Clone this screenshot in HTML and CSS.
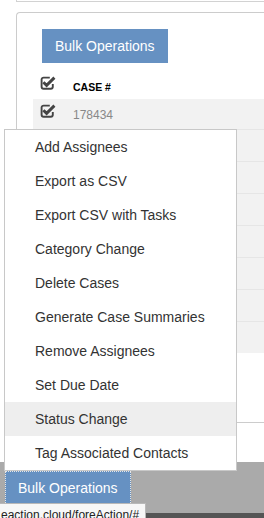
FILE: index.html
```html
<!DOCTYPE html>
<html lang="en">
<head>
    <meta charset="UTF-8">
    <meta name="viewport" content="width=device-width, initial-scale=1.0">
    <title>Cases</title>
    <link rel="stylesheet" href="styles.css">
</head>
<body>
    <div class="top-panel"></div>

    <div class="panel">
        <button class="btn">Bulk Operations</button>

        <div class="case-table">
            <div class="row head">
                <svg class="check" viewBox="0 0 16 14" width="16" height="14">
                    <path d="M9.8 1.6H3.6a2 2 0 0 0-2 2v7.2a2 2 0 0 0 2 2h7.2a2 2 0 0 0 2-2V8" fill="none" stroke="#444" stroke-width="1.9"/>
                    <path d="M3.4 6.2l3.2 3.2L14.4 1.6" fill="none" stroke="#444" stroke-width="2.9"/>
                </svg>
                <span class="label">CASE #</span>
            </div>
            <div class="row first">
                <svg class="check" viewBox="0 0 16 14" width="16" height="14">
                    <path d="M9.8 1.6H3.6a2 2 0 0 0-2 2v7.2a2 2 0 0 0 2 2h7.2a2 2 0 0 0 2-2V8" fill="none" stroke="#444" stroke-width="1.9"/>
                    <path d="M3.4 6.2l3.2 3.2L14.4 1.6" fill="none" stroke="#444" stroke-width="2.9"/>
                </svg>
                <span class="num">178434</span>
            </div>
            <div class="row"></div>
            <div class="row"></div>
            <div class="row"></div>
            <div class="row"></div>
            <div class="row"></div>
            <div class="row"></div>
            <div class="row"></div>
        </div>
    </div>

    <div class="footer">
        <button class="btn focused">Bulk Operations</button>
    </div>

    <!-- dropdown opened from the footer button -->
    <ul class="menu">
        <li>Add Assignees</li>
        <li>Export as CSV</li>
        <li>Export CSV with Tasks</li>
        <li>Category Change</li>
        <li>Delete Cases</li>
        <li>Generate Case Summaries</li>
        <li>Remove Assignees</li>
        <li>Set Due Date</li>
        <li class="hover">Status Change</li>
        <li>Tag Associated Contacts</li>
    </ul>

    <div class="status">eaction.cloud/foreAction/#</div>
</body>
</html>
```

FILE: styles.css
```css
html {
    overflow: hidden;
}

body {
    font-family: 'Liberation Sans', Arial, sans-serif;
    margin: 0;
    height: 518px;
    overflow: hidden;
    position: relative;
    background: #fff;
    color: #333;
}

.top-panel {
    height: 1px;
    margin-left: 16px;
    border-left: 1px solid #d2d2d2;
    border-bottom: 1px solid #d2d2d2;
}

.panel {
    margin: 10px 0 0 16px;
    border: 1px solid #cccccc;
    border-right: none;
    border-radius: 4px 0 0 4px;
    padding: 16px 0 69px 16px;
}

.btn {
    font-family: 'Liberation Sans', Arial, sans-serif;
    font-size: 14px;
    line-height: 20px;
    padding: 6px 12px;
    color: #fff;
    background: #6691c2;
    border: 1px solid #6691c2;
    border-radius: 0;
    display: block;
}

.panel .btn {
    margin-left: 9px;
}

.case-table {
    display: flex;
    flex-direction: column;
}

.row {
    display: flex;
    align-items: flex-start;
    padding-left: 7px;
    background: #f2f2f2;
    border-top: 1px solid #e6e6e6;
    box-sizing: border-box;
    height: 32px;
}

.row.head {
    background: none;
    border-top: none;
    height: 36px;
    padding-top: 13px;
}

.row.first {
    border-top: none;
    height: 30px;
    padding-top: 5px;
}

.check {
    display: block;
    flex: none;
}

.label {
    margin-left: 17px;
    margin-top: 4px;
    font-size: 10.5px;
    line-height: 14px;
    font-weight: bold;
    color: #000;
}

.num {
    margin-left: 17px;
    margin-top: 3px;
    font-size: 12px;
    line-height: 16px;
    color: #888;
}

.footer {
    margin-top: 39px;
    height: 42px;
    background: #aaaaaa;
    border-bottom: 5px solid #555555;
    padding: 9px 0 0 5px;
}

.btn.focused {
    outline: 1px dotted #e6e6e6;
    outline-offset: -1px;
}

/* dropdown over the table */
.menu {
    position: absolute;
    top: 129px;
    left: 4px;
    width: 233px;
    box-sizing: border-box;
    margin: 0;
    padding: 0;
    list-style: none;
    background: #fff;
    border: 1px solid #c8c8c8;
}

.menu li {
    font-size: 14px;
    line-height: 34px;
    height: 34px;
    padding-left: 30px;
    color: #333;
    white-space: nowrap;
}

.menu li.hover {
    background: #eeeeee;
}

.status {
    position: absolute;
    left: 0;
    top: 503px;
    height: 15px;
    padding: 3px 6px 0 1px;
    font-size: 12px;
    line-height: 16px;
    color: #222;
    background: #f7f7f7;
    border-top: 1px solid #b8b8b8;
    border-right: 1px solid #b8b8b8;
    box-sizing: border-box;
    overflow: hidden;
}
```
